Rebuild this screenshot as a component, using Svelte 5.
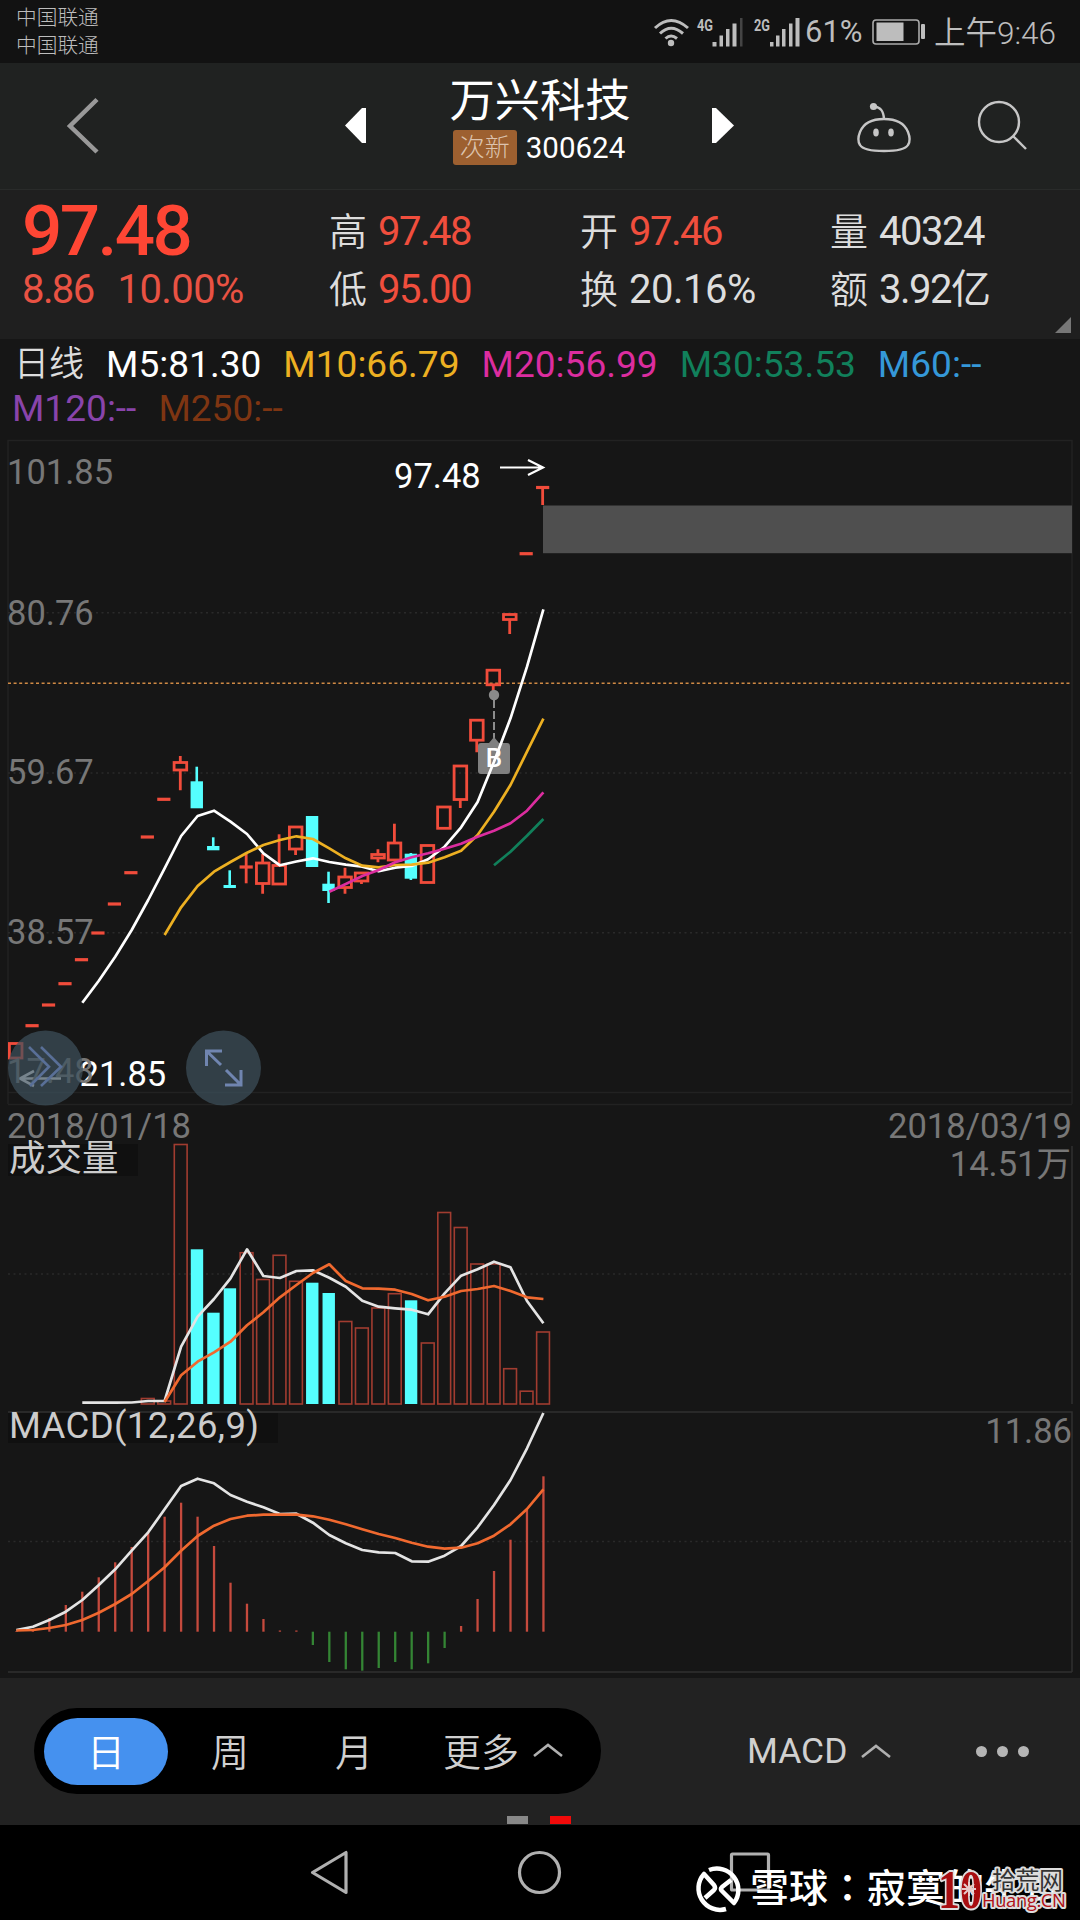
<script lang="ts">
	type Candle = { open: number; close: number; high?: number; low?: number; kind: string };

	const STEP = 16.47;
	const START = 16.4;
	const x = (i: number) => START + i * STEP;
	// bars sit slightly left of the line points
	const bx = (i: number) => x(i) - 0.8;

	// rows are [kind, top, bottom, high, low]
	const rawCandles: [string, number, number, number?, number?][] = [
		['up', 1043.5, 1058],
		['flat', 1025.7, 1025.7],
		['flat', 1005, 1005],
		['flat', 983.7, 983.7],
		['flat', 959.7, 959.7],
		['flat', 933, 933],
		['flat', 904, 904],
		['flat', 872.7, 872.7],
		['flat', 837, 837],
		['flat', 799.3, 799.3],
		['up', 762.5, 770, 756, 790.3],
		['down', 781.3, 808.3, 766.7, 808],
		['down', 846, 850.3, 837.3, 850],
		['down', 885, 888, 870.3, 888],
		['flat', 867, 867, 852.7, 883.3],
		['up', 863, 883.5, 854, 893.7],
		['up', 865.5, 884, 834.3, 884],
		['up', 827, 849, 826, 855],
		['down', 816, 867],
		['down', 883.7, 891, 871.7, 903],
		['up', 877, 887.5, 867.7, 893.7],
		['up', 873, 881, 872, 884],
		['up', 854.5, 858, 849.3, 862.3],
		['up', 843, 860, 823.7, 860],
		['down', 853.7, 878.7, 853, 880],
		['up', 845.5, 882.500],
		['up', 807, 828.3],
		['up', 766, 799.5, 766, 808],
		['up', 720.2, 740.2, 720, 752.3],
		['up', 670.2, 684.8, 670, 694],
		['up', 614.5, 619.5, 614, 634],
		['flat', 553.7, 553.7],
		['flat', 487.5, 487.5, 487, 505]
	];
	const candles: Candle[] = rawCandles.map(([kind, open, close, high, low]) => ({ kind, open, close, high, low }));

	const ma5 = [1002.7, 980.7, 956.7, 930, 900, 868.3, 836, 816, 810.7, 821.7, 834, 853.3, 865.3, 861.5, 858.3, 862, 864.7, 866.7, 871.3, 867.7, 866, 859.3, 846.7, 827.3, 802, 761.7, 718.3, 666.7, 609.3];
	const ma10 = [935, 907.3, 886, 871.7, 862, 852.7, 845, 840, 836.3, 839, 848.3, 858.3, 865.7, 867.3, 865, 864.7, 862.7, 857.3, 850.7, 835, 811.7, 785, 751.7, 718.7];
	const ma20 = [891.7, 884, 876, 870, 862.3, 857.3, 853.3, 848.7, 843.7, 836.7, 830.7, 823.3, 810.7, 792.3];
	const ma30 = [865.3, 851.7, 835.7, 819];

	// [kind, top], first bar sits at index 8
	const volumes: [string, number][] = [
		['up', 1398.5], ['up', 1401], ['up', 1144.5], ['down', 1249.3], ['down', 1312.7], ['down', 1288.3],
		['up', 1252.7], ['up', 1279.5], ['up', 1255.3], ['up', 1281.3], ['down', 1282.7], ['down', 1293],
		['up', 1321.5], ['up', 1328], ['up', 1308], ['up', 1293.7], ['down', 1300.3], ['up', 1343],
		['up', 1212.5], ['up', 1227.5], ['up', 1264], ['up', 1264], ['up', 1368.7], ['up', 1391.2], ['up', 1332]
	];
	const vol5 = [1402.7, 1402.7, 1402.7, 1402.5, 1401, 1401, 1346.7, 1316.7, 1299, 1278.3, 1249.3, 1276, 1278, 1271, 1270.3, 1277.7, 1286.7, 1300.7, 1306.7, 1308.3, 1309.7, 1314.3, 1293.3, 1275.7, 1269.3, 1261.7, 1267.3, 1301, 1323.3];
	const vol10 = [1402, 1375.3, 1361.7, 1352.3, 1341.7, 1325.3, 1312.3, 1297.3, 1285, 1273, 1264.3, 1281, 1288.3, 1288.7, 1289.7, 1294, 1300.3, 1296.7, 1291, 1289, 1286, 1291, 1297.3, 1299];

	const macdBars = [1631, 1630, 1618, 1605, 1591.7, 1577.3, 1562.3, 1547, 1532, 1516.7, 1502.7, 1516.7, 1546, 1582.7, 1603.7, 1619, 1630.5, 1630.5, 1645, 1662, 1669.3, 1670.7, 1668, 1662, 1669.3, 1663.3, 1648, 1626, 1599, 1571, 1539.7, 1510, 1476.3];
	const dif = [1630, 1626.7, 1620, 1611.7, 1600, 1585, 1569.3, 1550.7, 1532.3, 1509.3, 1486, 1478.7, 1483.3, 1495, 1501.7, 1507.3, 1514, 1513.7, 1522.7, 1535, 1543.3, 1550, 1552.3, 1553, 1561.3, 1561.7, 1555.7, 1546, 1527.3, 1505, 1480, 1448.3, 1413];
	const dea = [1630.5, 1630, 1628, 1625, 1620, 1612.7, 1604, 1594, 1581, 1567.3, 1550.7, 1536, 1525.7, 1519, 1515.7, 1514.7, 1514.7, 1514.7, 1516.3, 1519.7, 1524.3, 1529.3, 1534, 1538, 1542.7, 1546.7, 1548.7, 1547.7, 1543.3, 1535.7, 1524.3, 1509, 1489.3];

	function line(values: number[]) {
		// every series ends on the last trading day
		const first = 33 - values.length;
		return values.map((y, i) => `${x(first + i).toFixed(1)},${y}`).join(' ');
	}

	const stats = [
		[{ label: '高', value: '97.48', red: true }, { label: '低', value: '95.00', red: true }],
		[{ label: '开', value: '97.46', red: true }, { label: '换', value: '20.16%', red: false }],
		[{ label: '量', value: '40324', red: false }, { label: '额', value: '3.92亿', red: false }]
	];

	const averages = [
		{ text: 'M5:81.30', name: 'm5' },
		{ text: 'M10:66.79', name: 'm10' },
		{ text: 'M20:56.99', name: 'm20' },
		{ text: 'M30:53.53', name: 'm30' },
		{ text: 'M60:--', name: 'm60' },
		{ text: 'M120:--', name: 'm120' },
		{ text: 'M250:--', name: 'm250' }
	];

	const priceLabels = [
		{ text: '101.85', y: 484 },
		{ text: '80.76', y: 624.5 },
		{ text: '59.67', y: 784 },
		{ text: '38.57', y: 944 }
	];
</script>

<div class="screen">
	<div class="status">
		<div class="carriers">
			<span>中国联通</span>
			<span>中国联通</span>
		</div>
		<svg class="signals" width="150" height="34" viewBox="652 14 150 34">
			<g fill="none" stroke="#bdbdbd" stroke-width="3">
				<path d="M655 27 Q671 12 688 27" />
				<path d="M660 32.500 Q671 22 683 32.500" />
				<path d="M665.500 37.500 Q671 32.500 677 37.500" />
			</g>
			<circle cx="671" cy="42" r="3.2" fill="#bdbdbd" />
			<text x="697" y="30" class="net" textLength="16" lengthAdjust="spacingAndGlyphs">4G</text>
			<text x="754" y="30" class="net" textLength="16" lengthAdjust="spacingAndGlyphs">2G</text>
			<g fill="#bdbdbd">
				<rect x="712.500" y="41" width="4" height="4.500" />
				<rect x="719.500" y="34.500" width="3.500" height="11" />
				<rect x="726" y="28" width="3.500" height="17.500" />
				<rect x="732.500" y="22.500" width="4" height="23" />
				<rect x="740" y="17" width="2.500" height="28.500" fill="#444" />
				<rect x="770" y="41" width="3.500" height="4.500" />
				<rect x="776" y="34.500" width="3.500" height="11" />
				<rect x="782" y="28" width="3.500" height="17.500" />
				<rect x="789" y="22.500" width="3.500" height="23" />
				<rect x="795.500" y="17" width="4" height="28.500" />
			</g>
		</svg>
		<span class="percent">61%</span>
		<svg class="battery" width="54" height="28" viewBox="872 18 54 28">
			<rect x="873" y="20" width="46" height="24" rx="3" fill="none" stroke="#aaa" stroke-width="1.6" />
			<rect x="876.500" y="22.500" width="27" height="18.500" fill="#bdbdbd" />
			<rect x="921" y="24" width="4" height="15" rx="1" fill="#bdbdbd" />
		</svg>
		<span class="clock">上午9:46</span>
	</div>

	<header>
		<svg width="1080" height="127" viewBox="0 63 1080 127" class="header-icons">
			<path d="M97 99.500 L70 126 L97 152" fill="none" stroke="#999" stroke-width="4.500" />
			<path d="M366 108 V143 H362 L345 125.500 L362 108 Z" fill="#fff" />
			<path d="M712 108 V143 H716 L734 125.500 L716 108 Z" fill="#fff" />
			<g fill="none" stroke="#c6c6c6" stroke-width="2.400">
				<path d="M884 119 C894 119 904 122 908 132 C910 137 910 142 908 145 C905 150 896 151 884 151 C872 151 863 150 860 145 C858 142 858 137 860 132 C864 122 874 119 884 119 Z" />
				<path d="M874 106.500 C881 107 883.500 111 884 119" />
				<circle cx="999" cy="122" r="20" />
				<path d="M1013.500 136.500 L1026 149" />
			</g>
			<circle cx="873.500" cy="106.500" r="3.600" fill="#c6c6c6" />
			<ellipse cx="876" cy="132.500" rx="2.800" ry="4" fill="#c6c6c6" />
			<ellipse cx="891" cy="132.500" rx="2.800" ry="4" fill="#c6c6c6" />
		</svg>
		<div class="title">
			<h1>万兴科技</h1>
			<div class="code">
				<span class="tag">次新</span>
				<span class="number">300624</span>
			</div>
		</div>
	</header>

	<section class="quote">
		<div class="price">
			<strong>97.48</strong>
			<div class="change"><span>8.86</span><span class="wide">10.00%</span></div>
		</div>
		{#each stats as column}
			<div class="column">
				{#each column as item}
					<div class="stat">
						<span class="label">{item.label}</span>
						<span class="value" class:red={item.red} class:wide={item.value.endsWith('%')}>{item.value}</span>
					</div>
				{/each}
			</div>
		{/each}
		<div class="corner"></div>
	</section>

	<div class="averages">
		<span class="period">日线</span>
		{#each averages as avg}
			<span class={avg.name}>{avg.text}</span>
		{/each}
	</div>

	<!-- Daily candles -->
	<svg class="panel" width="1080" height="675" viewBox="0 430 1080 675">
		<path d="M8 1104 V440.500 H1072 V1104" class="frame" />
		<path d="M8 1092.500 H1072 M8 1104.500 H1072" class="frame" />
		<path d="M8 612.700 H1072 M8 773 H1072 M8 932.700 H1072" class="grid" />
		<rect x="543" y="505.500" width="529" height="47.700" fill="#4f4f4f" />

		{#each priceLabels as label}
			<text x="7" y={label.y} class="axis">{label.text}</text>
		{/each}

		<path d="M8 683.300 H1072" stroke="#d08a45" stroke-width="1.600" stroke-dasharray="3 2.600" />

		{#each candles as c, i}
			{#if c.kind === 'down'}
				<rect x={bx(i) - 6.2} y={c.open} width="12.4" height={c.close - c.open} fill="#55ffff" />
				{#if c.high}
					<path d="M{bx(i)} {c.high} V{c.low}" stroke="#55ffff" stroke-width="2.6" />
				{/if}
			{:else if c.kind === 'flat'}
				<path d="M{bx(i) - 6.6} {c.open} H{bx(i) + 6.6}" stroke="#f14c3b" stroke-width="3.2" />
				{#if c.high}
					<path d="M{bx(i)} {c.high} V{c.low}" stroke="#f14c3b" stroke-width="2.8" />
				{/if}
			{:else}
				<rect x={bx(i) - 6.2} y={c.open} width="12.6" height={c.close - c.open} fill="none" stroke="#f14c3b" stroke-width="2.8" />
				{#if c.high}
					<path d="M{bx(i)} {c.high} V{c.open} M{bx(i)} {c.close} V{c.low}" stroke="#f14c3b" stroke-width="2.8" />
				{/if}
			{/if}
		{/each}

		<!-- Buy marker -->
		<circle cx="494" cy="695" r="5.2" fill="#8a8a8a" />
		<path d="M494 700 V740" stroke="#aaa" stroke-width="1.600" stroke-dasharray="8 3" />
		<path d="M481 743 H489 L494 737 L499 743 H507 Q510 743 510 746 V771 Q510 774 507 774 H481 Q478 774 478 771 V746 Q478 743 481 743 Z" fill="#808080" />
		<text x="494" y="767" class="buy">B</text>

		<polyline points={line(ma30)} class="line" stroke="#11805b" />
		<polyline points={line(ma5)} class="line" stroke="#ffffff" />
		<polyline points={line(ma10)} class="line" stroke="#edb022" />
		<polyline points={line(ma20)} class="line" stroke="#dc2d9f" />

		<text x="394" y="487.500" class="mark">97.48</text>
		<path d="M500 467.500 H543 M528 460 L543 467.500 L528 475" fill="none" stroke="#fff" stroke-width="2.200" />
		<text x="79.500" y="1085.500" class="mark">21.85</text>
		<path d="M61 1078.500 H20 M34 1071 L20 1078.500 L34 1086" fill="none" stroke="#fff" stroke-width="2.600" />
		<text x="7" y="1083" class="axis">17.48</text>

		<g class="round">
			<circle cx="45.500" cy="1068" r="37.500" />
			<circle cx="223.500" cy="1068" r="37.500" />
		</g>
		<path d="M29 1047 L49 1066.700 L30 1086 M41 1047 L61 1066.700 L41 1086" fill="none" stroke="#596f97" stroke-width="2.600" />
		<path d="M222 1051 H206.500 V1066 M206.500 1051 L221 1065 M225 1085 H241 V1070 M241 1085 L226 1070" fill="none" stroke="#7085b0" stroke-width="3" />
	</svg>

	<div class="dates">
		<span>2018/01/18</span>
		<span>2018/03/19</span>
	</div>

	<!-- Volume -->
	<svg class="panel" width="1080" height="267" viewBox="0 1144 1080 267">
		<rect x="8" y="1144" width="130" height="32" fill="#101010" />
		<path d="M1072 1146 V1404" class="frame bright" />
		<path d="M8 1274 H1072" class="grid" />
		<text x="9" y="1171" class="name">成交量</text>
		<text x="1071" y="1176" class="axis right">14.51万</text>
		{#each volumes as [kind, top], i}
			{#if kind === 'down'}
				<rect x={bx(i + 8) - 6} y={top} width="12.4" height={1404 - top} fill="#55ffff" />
			{:else}
				<rect x={bx(i + 8) - 6} y={top} width="12.8" height={1404 - top} fill="none" stroke="#a13c30" stroke-width="1.6" />
			{/if}
		{/each}
		<polyline points={line(vol5)} class="line" stroke="#e4e4e4" />
		<polyline points={line(vol10)} class="line" stroke="#f0692f" />
	</svg>

	<!-- MACD -->
	<svg class="panel" width="1080" height="267" viewBox="0 1411 1080 267">
		<rect x="8" y="1413" width="270" height="30" fill="#101010" />
		<path d="M8 1412 H1072 V1672 M8 1672 H1072" class="frame bright" />
		<path d="M8 1541.500 H1072" class="grid" />
		<text x="9" y="1438" class="name" textLength="250">MACD(12,26,9)</text>
		<text x="1072" y="1443" class="axis right">11.86</text>
		{#each macdBars as y, i}
			<path d="M{x(i)} 1631.7 V{y}" stroke={y > 1632 ? '#348534' : '#c54a3d'} stroke-width="2.3" />
		{/each}
		<polyline points={line(dif)} class="line" stroke="#e4e4e4" />
		<polyline points={line(dea)} class="line" stroke="#f0692f" />
	</svg>

	<div class="toolbar">
		<div class="periods">
			<button class="active">日</button>
			<button>周</button>
			<button>月</button>
			<button class="more">
				更多
				<svg width="30" height="14" viewBox="0 0 30 14"><path d="M1 13 L15 2 L29 13" /></svg>
			</button>
		</div>
		<button class="indicator">
			MACD
			<svg width="30" height="14" viewBox="0 0 30 14"><path d="M1 13 L15 2 L29 13" /></svg>
		</button>
		<div class="dots"><i></i><i></i><i></i></div>
		<div class="pager"><i></i><i class="on"></i></div>
	</div>

	<nav>
		<svg width="1080" height="95" viewBox="0 1825 1080 95">
			<g fill="none" stroke="#b0b0b0" stroke-width="3.200" stroke-linejoin="round">
				<path d="M312.500 1872.500 L346 1852.500 V1892.500 Z" />
				<circle cx="539.500" cy="1872.500" r="20" />
				<rect x="731.500" y="1854" width="37" height="36" rx="1" />
			</g>
			<!-- Xueqiu mark -->
			<g fill="none" stroke="#fff" stroke-width="4.500" stroke-linejoin="round">
				<path d="M709 1870 A21.500 21.500 0 0 1 734 1903 L722 1891 Q720 1889 722 1887 L731 1880" />
				<path d="M726 1909 A21.500 21.500 0 0 1 704 1874 L714 1885 Q716 1888 714 1890 L705 1898" />
			</g>
			<text x="750" y="1902" class="author" textLength="312">雪球：寂寞的牛背</text>
			<g class="site">
				<text x="938" y="1908" class="ten" textLength="44" lengthAdjust="spacingAndGlyphs">10</text>
				<text x="992" y="1889" class="cn" textLength="71">拾荒网</text>
				<text x="982" y="1907" class="domain" textLength="84">Huang.CN</text>
			</g>
			<g stroke="#e8caca" stroke-width="2">
				<path d="M969 1882 V1896 M962 1889 H976 M964 1884 L974 1894 M974 1884 L964 1894" />
			</g>
		</svg>
	</nav>
</div>

<style>
	:global(body) {
		margin: 0;
		background: #000;
	}

	.screen {
		width: 1080px;
		height: 1920px;
		overflow: hidden;
		background: #161616;
		color: #ddd;
		font-family: Roboto, 'Noto Sans CJK SC', sans-serif;
	}

	svg {
		display: block;
		flex: none;
		overflow: visible;
	}

	.status {
		height: 63px;
		background: #121212;
		display: flex;
		align-items: center;
		color: #bdbdbd;
		box-sizing: border-box;
		padding-left: 16px;
		white-space: nowrap;
	}

	.carriers {
		display: flex;
		flex-direction: column;
		width: 636px;
		padding-top: 1px;
		font-size: 20.7px;
		line-height: 28px;
		font-weight: 300;
	}

	.net {
		font-size: 17px;
		font-weight: 700;
		fill: #bdbdbd;
	}

	.percent {
		width: 68px;
		padding-left: 3px;
		font-size: 31px;
		box-sizing: border-box;
	}

	.battery {
		margin-left: 2px;
	}

	.clock {
		margin-left: 8px;
		padding-bottom: 3px;
		font-size: 31.5px;
		font-weight: 350;
	}

	header {
		height: 127px;
		background: #202221;
		border-bottom: 1px solid #292b2a;
		box-sizing: border-box;
		display: grid;
	}

	.header-icons,
	.title {
		grid-area: 1 / 1;
	}

	.title {
		display: flex;
		flex-direction: column;
		align-items: center;
		color: #fff;
	}

	h1 {
		margin: 11px 0 0;
		font-size: 45.3px;
		line-height: 56px;
		font-weight: 400;
	}

	.code {
		display: flex;
		align-items: center;
		gap: 9px;
		margin: -2px 2px 0 0;
		font-size: 29.5px;
		line-height: 35px;
	}

	.number {
		padding-top: 3px;
	}

	.tag {
		width: 64px;
		height: 35px;
		border-radius: 3px;
		background: #9d6030;
		color: #dcc3ae;
		font-size: 25px;
		font-weight: 300;
		text-align: center;
	}

	.quote {
		height: 149px;
		background: #1f1f1f;
		display: grid;
		grid-template-columns: 307px 251px 250px 250px;
		padding-left: 22px;
		position: relative;
	}

	.price {
		color: #ff4634;
	}

	.price strong {
		display: block;
		margin-top: 4px;
		font-size: 71px;
		line-height: 74px;
		font-weight: 500;
		letter-spacing: -2.6px;
	}

	.change {
		display: flex;
		gap: 24px;
		font-size: 40px;
		line-height: 44px;
		letter-spacing: -1.6px;
		color: #e95243;
	}

	.change .wide {
		letter-spacing: -0.6px;
	}

	.column {
		padding-top: 13px;
	}

	.stat {
		display: flex;
		align-items: center;
		height: 58px;
		line-height: 58px;
	}

	.stat .label {
		width: 49px;
		font-size: 38px;
		font-weight: 350;
	}

	.stat .value {
		font-size: 40px;
		letter-spacing: -1.5px;
	}

	.stat .wide {
		letter-spacing: -0.5px;
	}

	.stat .red {
		color: #f04e3d;
	}

	.corner {
		position: absolute;
		right: 9px;
		bottom: 6px;
		border-left: 16px solid transparent;
		border-bottom: 16px solid #777;
	}

	.averages {
		height: 91px;
		box-sizing: border-box;
		padding: 4px 0 0 12px;
		display: flex;
		flex-wrap: wrap;
		align-content: flex-start;
		column-gap: 22px;
		font-size: 37.1px;
		line-height: 44px;
	}

	.period {
		font-size: 35px;
		font-weight: 350;
		padding-left: 2px;
	}

	.m5 { color: #fff; }
	.m10 { color: #edb022; }
	.m20 { color: #dc2d9f; }
	.m30 { color: #11805b; }
	.m60 { color: #3598d8; }
	.m120 { color: #8944ab; }
	.m250 { color: #7e3512; }

	.frame {
		fill: none;
		stroke: #222;
		stroke-width: 1.5;
	}

	.frame.bright {
		stroke: #303030;
	}

	.grid {
		stroke: #2a2a2a;
		stroke-width: 1.5;
		stroke-dasharray: 2 3.5;
	}

	.line {
		fill: none;
		stroke-width: 2.7;
		stroke-linejoin: round;
	}

	.axis {
		font-size: 34.5px;
		fill: #777;
	}

	.right {
		text-anchor: end;
	}

	.mark {
		font-size: 34.5px;
		fill: #fff;
	}

	.buy {
		font-size: 26px;
		fill: #fff;
		text-anchor: middle;
		font-weight: 500;
	}

	.name {
		font-size: 36.5px;
		fill: #ccc;
	}

	.round {
		fill: #3e515d;
		opacity: 0.7;
	}

	.dates {
		height: 39px;
		padding: 2px 8px 0 7px;
		box-sizing: border-box;
		display: flex;
		justify-content: space-between;
		font-size: 34.6px;
		line-height: 39px;
		color: #777;
	}

	.toolbar {
		height: 147px;
		background: #222;
		position: relative;
		display: flex;
		align-items: center;
		box-sizing: border-box;
		padding: 0 0 1px 34px;
	}

	button {
		border: 0;
		padding: 0 0 3px;
		background: none;
		color: #d0d0d0;
		font-family: inherit;
		font-size: 38px;
		font-weight: 350;
		display: flex;
		align-items: center;
		justify-content: center;
	}

	button path {
		fill: none;
		stroke: #b0b0b0;
		stroke-width: 2.6;
	}

	.periods {
		width: 567px;
		height: 86px;
		border-radius: 43px;
		background: #000;
		display: flex;
		align-items: center;
		box-sizing: border-box;
		padding-left: 10px;
	}

	.periods button {
		width: 124px;
		height: 67px;
		box-sizing: border-box;
	}

	.periods .active {
		background: #4591ef;
		border-radius: 34px;
		color: #fff;
	}

	.periods .more {
		width: 154px;
		gap: 14px;
		margin-left: 10px;
	}

	.indicator {
		margin-left: 146px;
		padding: 0;
		font-size: 35.4px;
		font-weight: 400;
		gap: 14px;
	}

	.dots {
		display: flex;
		gap: 10px;
		margin-left: 85px;
	}

	.dots i {
		width: 11px;
		height: 11px;
		border-radius: 50%;
		background: #b5b5b5;
	}

	.pager {
		position: absolute;
		left: 507px;
		bottom: 1px;
		display: flex;
		gap: 22px;
	}

	.pager i {
		width: 21px;
		height: 8px;
		background: #888;
	}

	.pager .on {
		background: #f20a0a;
	}

	nav {
		height: 95px;
		background: #000;
	}

	.author {
		font-family: 'Noto Sans CJK TC', sans-serif;
		font-size: 39px;
		font-weight: 500;
		fill: #fff;
	}

	.site text {
		stroke: #ddd;
		stroke-width: 4;
		paint-order: stroke;
		stroke-linejoin: round;
	}

	.ten {
		font-family: 'Liberation Serif', serif;
		font-size: 54px;
		font-weight: 700;
		fill: #a80d10;
	}

	.cn {
		font-size: 24px;
		fill: #333;
	}

	.domain {
		font-family: 'Open Sans', sans-serif;
		font-size: 18.5px;
		fill: #b11216;
	}
</style>
